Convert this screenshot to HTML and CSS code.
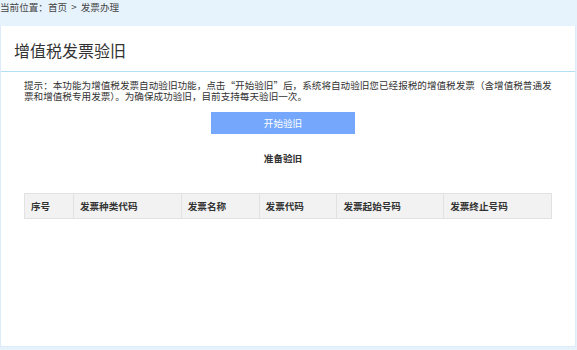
FILE: index.html
```html
<!DOCTYPE html>
<html lang="zh-CN">
 <head>
  <meta charset="UTF-8">
  <meta name="viewport" content="width=device-width, initial-scale=1.0">
  <title>增值税发票验旧</title>
  <link rel="stylesheet" href="styles.css">
 </head>
 <body>
  <div class="crumb">当前位置：首页 &gt; 发票办理</div>
  <div class="panel">
   <div class="panel-title">
    <h1>增值税发票验旧</h1>
   </div>
   <div class="panel-body">
    <p class="tip">提示：本功能为增值税发票自动验旧功能，点击“开始验旧”后，系统将自动验旧您已经报税的增值税发票（含增值税普通发票和增值税专用发票）。为确保成功验旧，目前支持每天验旧一次。</p>
    <div class="actions">
     <button class="btn-start">开始验旧</button>
    </div>
    <div class="status">准备验旧</div>
    <table class="grid">
     <thead>
      <tr>
       <th class="col-no">序号</th>
       <th class="col-type">发票种类代码</th>
       <th class="col-name">发票名称</th>
       <th class="col-code">发票代码</th>
       <th class="col-start">发票起始号码</th>
       <th class="col-end">发票终止号码</th>
      </tr>
     </thead>
     <tbody>
     </tbody>
    </table>
   </div>
  </div>
 </body>
</html>
```
FILE: styles.css
```css
* {
    margin: 0;
    padding: 0;
    box-sizing: border-box;
    font-family: "Noto Sans CJK SC", "Liberation Sans", sans-serif;
}

body {
    background: #e7f3fc;
    color: #333;
    font-size: 9.6px;
    height: 350px;
    overflow: hidden;
}

.crumb {
    height: 26px;
    padding-top: 1px;
    color: #444;
    font-size: 9.6px;
    line-height: 12px;
    word-spacing: 2px;
}

.panel {
    background: #fff;
    border: 1px solid #dcebf7;
    border-top: none;
    width: 576px;
    height: 321px;
}

.panel-title {
    height: 46px;
    border-bottom: 1px solid #b3e0f5;
    padding: 0 13px;
    display: flex;
    align-items: center;
}

.panel-title h1 {
    font-size: 16px;
    font-weight: normal;
    color: #333;
    line-height: 20px;
    padding-top: 2px;
}

.panel-body {
    padding: 8px 21px 0 23px;
}

.tip {
    font-size: 9.6px;
    line-height: 11px;
    color: #333;
    font-feature-settings: "fwid";
}

.actions {
    display: flex;
    justify-content: center;
    margin-top: 10px;
    padding-right: 12px;
}

.btn-start {
    width: 144px;
    height: 22px;
    border: none;
    background: #75a8fd;
    color: #fff;
    font-size: 9.6px;
}

.status {
    text-align: center;
    font-weight: bold;
    color: #333;
    margin-top: 18px;
    line-height: 12px;
    padding-right: 12px;
}

.grid {
    margin-top: 29px;
    width: 528px;
    border-collapse: collapse;
}

.grid th {
    background: #f2f2f2;
    border: 1px solid #e2e2e2;
    height: 25px;
    padding: 0 6px;
    text-align: left;
    font-weight: bold;
    color: #333;
    font-size: 9.6px;
}

.col-no { width: 49px; }
.col-type { width: 108px; }
.col-name { width: 78px; }
.col-code { width: 78px; }
.col-start { width: 107px; }
.col-end { width: 108px; }
```
